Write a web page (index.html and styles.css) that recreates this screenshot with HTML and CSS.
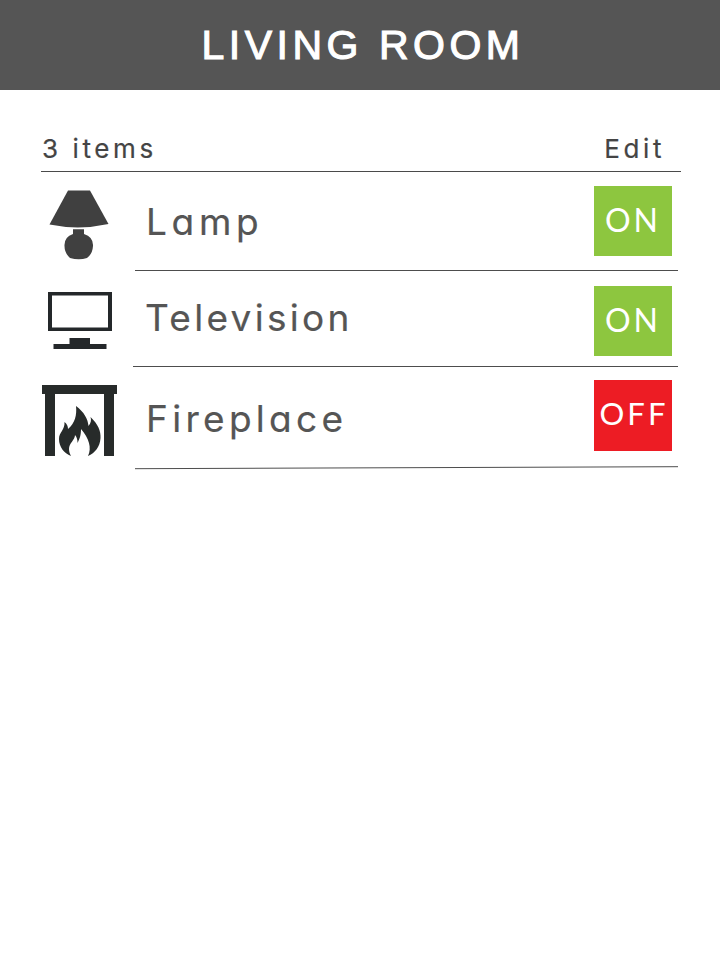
FILE: index.html
```html
<!DOCTYPE html>
<html lang="en">
<head>
<meta charset="utf-8">
<title>Living Room</title>
<link rel="stylesheet" href="styles.css">
</head>
<body>
<header class="bar"><h1 class="title">LIVING ROOM</h1></header>
<main class="content">
  <div class="summary"><span class="count">3 items</span><span class="edit">Edit</span></div>
  <ul class="devices">
    <li class="device lamp">
      <svg class="icon" viewBox="0 0 90 90" aria-hidden="true"><path fill="#404040" d="M32 10.500H54L72.500 44Q43 50.500 13.500 44.500Z"/><path fill="#404040" d="M37 49.300H48V54Q57.500 57 57 66Q56.500 74 51 78Q43 80.500 34 78Q28.500 73 28.500 66Q28 57 37 54Z"/></svg>
      <div class="row"><span class="name">Lamp</span><button class="toggle on">ON</button></div>
    </li>
    <li class="device television">
      <svg class="icon" viewBox="0 0 90 90" aria-hidden="true"><path fill="#24282a" fill-rule="evenodd" d="M12 12H76V51H12ZM16 15.500V47.500H72V15.500Z"/><path fill="#24282a" d="M33.500 58H54V64H70.500V69H17.500V64H33.500Z"/></svg>
      <div class="row"><span class="name">Television</span><button class="toggle on">ON</button></div>
    </li>
    <li class="device fireplace">
      <svg class="icon" viewBox="0 0 90 90" aria-hidden="true"><path fill="#272b2a" d="M6 10H81V19H78V81H68V19H19V81H9V19H6Z"/><path fill="#272b2a" d="M40 31C48 37 52 44 52.500 51C55 48 55.500 45 54.500 42C62 49 65 56 64.500 63C64 72 59 78 52 81C56 73 53 63 45 54C45 60 44 63 41.500 68C41.500 65 41 62 39 60C39 65 33 68 33 74C33 77 34 79 35 81C28 78 23 72 23 64C23 57 29 55 28.500 47C31 49 32 51 32 54C39 48 41 40 40 31Z"/></svg>
      <div class="row"><span class="name">Fireplace</span><button class="toggle off">OFF</button></div>
      <svg class="rule" viewBox="0 0 544 4" aria-hidden="true"><path d="M0 2.700L543 .700" stroke="#4d4d4d" fill="none"/></svg>
    </li>
  </ul>
</main>
</body>
</html>
```

FILE: styles.css
```css
* { box-sizing: border-box; }
body { margin: 0; background: #fff; color: #555; font-family: Inter, sans-serif; font-feature-settings: "cv11"; }
.bar { height: 90px; background: #555; text-align: center; }
.title { margin: 0; padding-left: 6px; color: #fff; font: 400 41px/91px "Liberation Sans", Arial, sans-serif; letter-spacing: 4.500px; -webkit-text-stroke: 1.1px #fff; }
.content { padding: 36px 39px 0 41px; }
.summary { display: flex; justify-content: space-between; height: 46px; padding: 0 15px 0 1px; border-bottom: 1px solid #4a4a4a; color: #444; font-size: 26px; line-height: 46px; letter-spacing: 3.600px; -webkit-text-stroke: .2px #444; }
.edit { padding-right: 1px; }
.devices { margin: 0; padding: 0; list-style: none; }
.device { display: flex; flex-wrap: wrap; align-items: flex-start; padding-right: 3px; }
.icon { width: 90px; height: 90px; margin: 8px 3px 0 -5px; }
.row { display: flex; flex: 1; justify-content: space-between; margin-left: 6px; padding: 14px 6px 0 11px; border-bottom: 1px solid #4d4d4d; }
.lamp .row { height: 99px; }
.television .row { height: 96px; margin-left: 4px; padding-top: 15px; padding-left: 12px; }
.television .icon { margin-top: 9px; margin-bottom: -3px; }
.fireplace .row { height: 99px; padding-top: 13px; border: 0; }
.rule { width: 544px; height: 4px; margin-left: 94px; }
.fireplace { padding-right: 2px; }
.fireplace .row { padding-right: 7px; }
.name { font-size: 37px; line-height: 71px; letter-spacing: 4.700px; -webkit-text-stroke: .2px #555; }
.television .name { line-height: 64px; letter-spacing: 3.300px; }
.fireplace .name { line-height: 77px; letter-spacing: 4.300px; }
.toggle { width: 78px; height: 70px; padding: 0 0 2px; border: 0; color: #fff; font: 400 32px/68px Lato, sans-serif; letter-spacing: 3px; }
.on { background: #8dc63f; }
.off { height: 71px; padding: 0 0 5px 2px; font-size: 31px; line-height: 66px; background: #ed1c24; }
```
